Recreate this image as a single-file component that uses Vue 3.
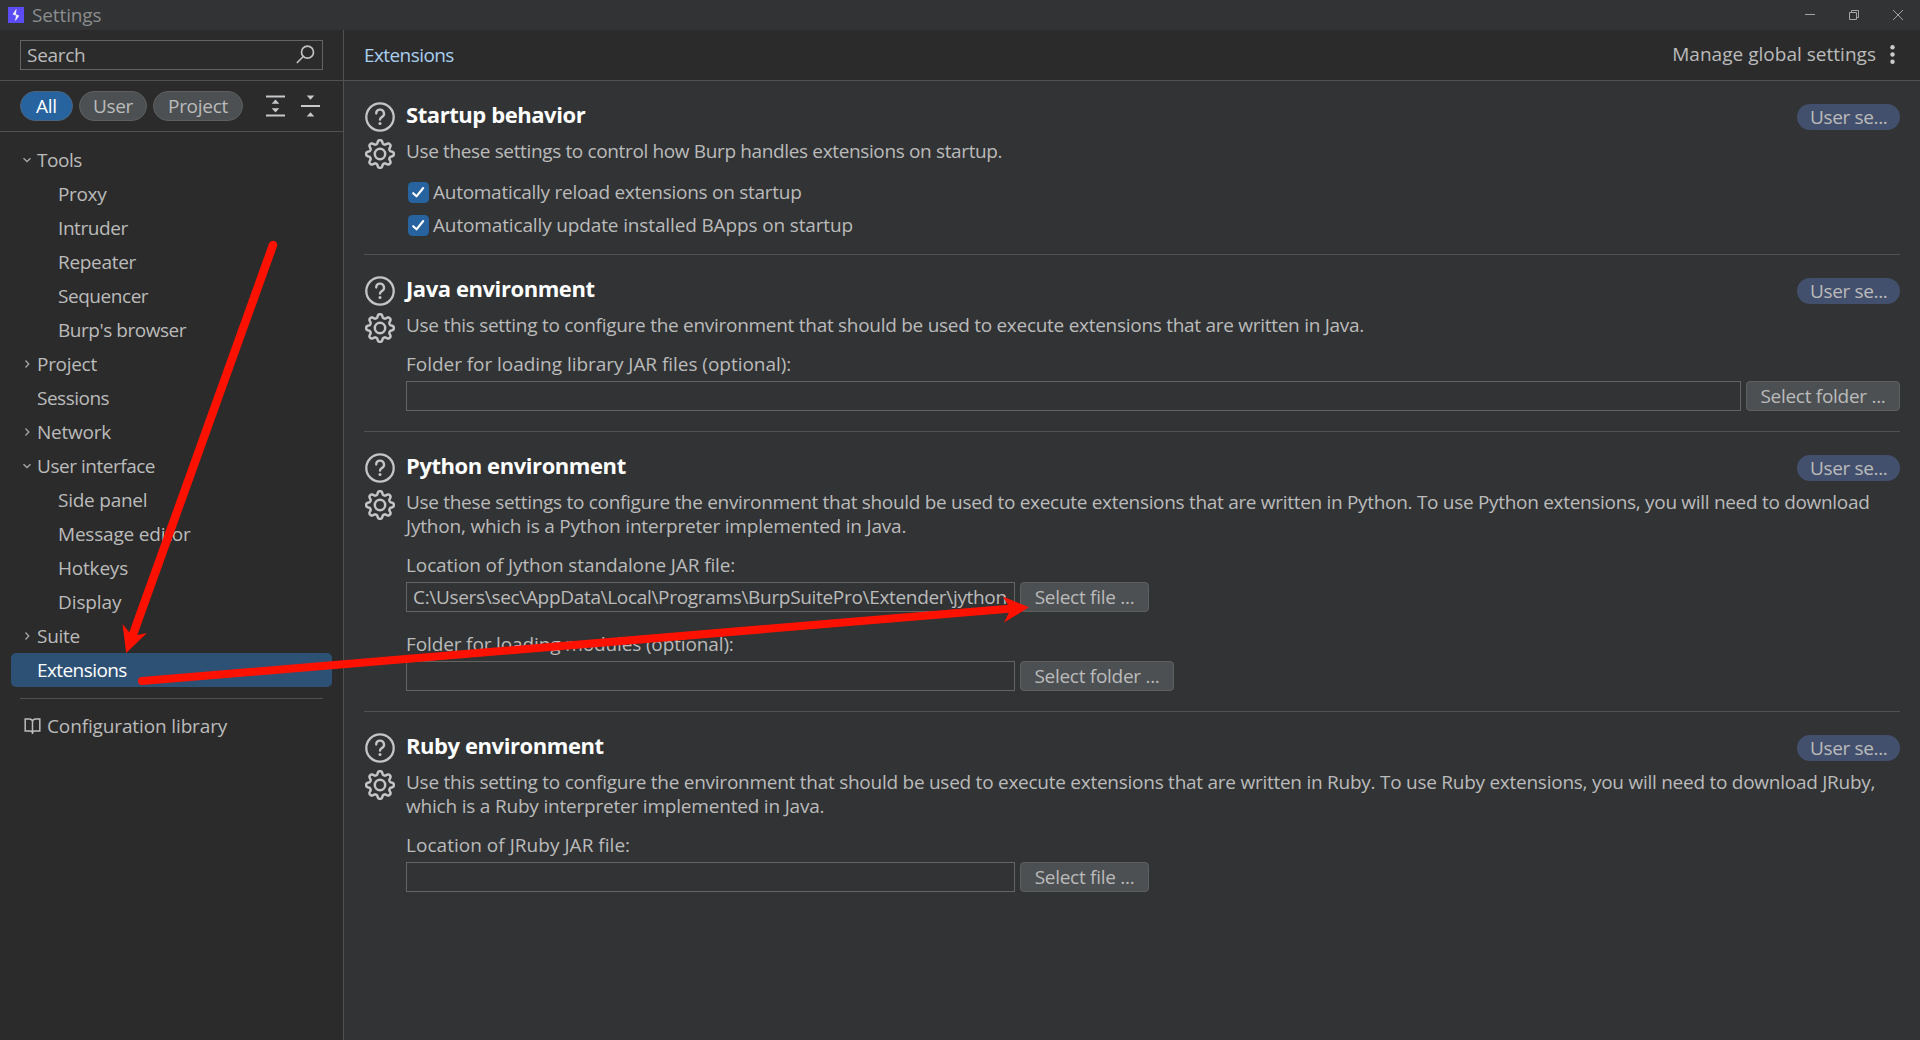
<script setup>
// `ls` is the letter spacing of a text, in pixels.
const tree = [
  { label: 'Tools', state: 'open', ls: -0.48 },
  { label: 'Proxy', child: true, ls: -0.35 },
  { label: 'Intruder', child: true, ls: -0.42 },
  { label: 'Repeater', child: true, ls: -0.3 },
  { label: 'Sequencer', child: true, ls: -0.45 },
  { label: "Burp's browser", child: true, ls: -0.46 },
  { label: 'Project', state: 'closed', ls: -0.3 },
  { label: 'Sessions', ls: -0.5 },
  { label: 'Network', state: 'closed', ls: -0.25 },
  { label: 'User interface', state: 'open', ls: -0.47 },
  { label: 'Side panel', child: true, ls: -0.24 },
  { label: 'Message editor', child: true, ls: -0.2 },
  { label: 'Hotkeys', child: true, ls: -0.2 },
  { label: 'Display', child: true, ls: -0.1 },
  { label: 'Suite', state: 'closed', ls: -0.28 },
  { label: 'Extensions', selected: true, ls: -0.58 },
]

const sections = [
  {
    title: 'Startup behavior',
    lines: [{ text: 'Use these settings to control how Burp handles extensions on startup.', ls: -0.36 }],
    checks: [
      { text: 'Automatically reload extensions on startup', ls: -0.27 },
      { text: 'Automatically update installed BApps on startup', ls: -0.14 },
    ],
  },
  {
    title: 'Java environment',
    lines: [{ text: 'Use this setting to configure the environment that should be used to execute extensions that are written in Java.', ls: -0.28 }],
    fields: [{ label: 'Folder for loading library JAR files (optional):', ls: -0.04, value: '', button: 'Select folder ...', wide: true }],
  },
  {
    title: 'Python environment',
    lines: [
      { text: 'Use these settings to configure the environment that should be used to execute extensions that are written in Python. To use Python extensions, you will need to download', ls: -0.305 },
      { text: 'Jython, which is a Python interpreter implemented in Java.', ls: -0.2 },
    ],
    fields: [
      { label: 'Location of Jython standalone JAR file:', ls: -0.11, value: 'C:\\Users\\sec\\AppData\\Local\\Programs\\BurpSuitePro\\Extender\\jython', button: 'Select file ...' },
      { label: 'Folder for loading modules (optional):', ls: -0.13, value: '', button: 'Select folder ...' },
    ],
  },
  {
    title: 'Ruby environment',
    lines: [
      { text: 'Use this setting to configure the environment that should be used to execute extensions that are written in Ruby. To use Ruby extensions, you will need to download JRuby,', ls: -0.258 },
      { text: 'which is a Ruby interpreter implemented in Java.', ls: -0.2 },
    ],
    fields: [{ label: 'Location of JRuby JAR file:', ls: 0.03, value: '', button: 'Select file ...' }],
  },
]

const spacing = (ls) => ({ letterSpacing: ls + 'px' })

// Eight-toothed outline, drawn as a flattened wave around a circle.
const gear = (() => {
  const pts = []
  for (let i = 0; i < 144; i++) {
    const a = (i / 144) * Math.PI * 2
    const r = 12.1 + 1.7 * Math.tanh(1.7 * Math.cos(8 * a)) / Math.tanh(1.7)
    pts.push(`${(15 + r * Math.cos(a)).toFixed(2)} ${(15 + r * Math.sin(a)).toFixed(2)}`)
  }
  return 'M' + pts.join('L') + 'Z'
})()
</script>

<template>
  <div class="window">
    <header class="titlebar">
      <svg class="logo" width="16" height="16" viewBox="0 0 16 16">
        <rect width="16" height="16" fill="#5b4cf5" />
        <path d="M8.200 2.400 5 7.200 8.500 8.400 7.400 13.400 11 8.800 7.500 7.400Z" fill="#fff" stroke="#fff" stroke-width=".5" />
      </svg>
      <span class="window-title">Settings</span>
      <svg class="controls" width="102" height="12" viewBox="0 0 102 12" fill="none" stroke="#a2a3a4">
        <path d="M1 5.500h10" />
        <path d="M45.500 3.500h7v7h-7zM47.500 3.500v-2h7v7h-2" />
        <path d="m89 1 10 10M99 1 89 11" />
      </svg>
    </header>

    <div class="content">
      <aside class="sidebar">
        <div class="search-row">
          <div class="search">
            <span>Search</span>
            <svg width="20" height="20" viewBox="0 0 20 20" fill="none" stroke="#bfc1c3" stroke-width="1.700" stroke-linecap="round">
              <circle cx="11.500" cy="7.200" r="6" />
              <path d="M7.300 11.500 1.300 17.500" />
            </svg>
          </div>
        </div>
        <div class="filters">
          <span class="pill active all">All</span>
          <span class="pill user">User</span>
          <span class="pill project">Project</span>
          <svg class="expand" width="19" height="22" viewBox="0 0 19 22" fill="#c6c8ca">
            <path d="M0 .5h19v2H0zM0 19.500h19v2H0zM9.500 4.500l3.800 4.300H5.700zM9.500 17.500l3.800-4.300H5.700z" />
          </svg>
          <svg class="collapse" width="19" height="22" viewBox="0 0 19 22" fill="#c6c8ca">
            <path d="M0 10h19v2H0zM9.500 4.800l3.800-4.300H5.700zM9.500 17.200l3.800 4.300H5.700z" />
          </svg>
        </div>
        <nav class="tree">
          <div v-for="n in tree" :key="n.label" class="node" :class="{ child: n.child, selected: n.selected }">
            <svg v-if="!n.child" class="chevron" width="10" height="10" viewBox="0 0 10 10" fill="none" stroke="#a4a7a9" stroke-width="1.300">
              <path v-if="n.state === 'open'" d="M1.500 3.200 5 6.500 8.500 3.200" />
              <path v-if="n.state === 'closed'" d="M3.500 1.500 6.800 5 3.500 8.500" />
            </svg>
            <span :style="spacing(n.ls)">{{ n.label }}</span>
          </div>
        </nav>
        <div class="library">
          <svg width="18" height="18" viewBox="0 0 18 18" fill="none" stroke="#bbbdbf" stroke-width="1.500">
            <path d="M8.500 4.200C8 2.500 7 2 5.500 2H1.200v12H6c1.500 0 2.500.7 2.500 1.900M8.500 4.200C9 2.500 10 2 11.500 2h4.300v12H11c-1.500 0-2.500.7-2.500 1.900M8.500 4v13" />
          </svg>
          <span>Configuration library</span>
        </div>
      </aside>

      <main class="main">
        <div class="main-head">
          <span class="crumb">Extensions</span>
          <span class="manage">Manage global settings</span>
          <svg width="6" height="20" viewBox="0 0 6 20" fill="#c9cbcd">
            <circle cx="2.500" cy="2.200" r="2.200" />
            <circle cx="2.500" cy="9.500" r="2.200" />
            <circle cx="2.500" cy="16.800" r="2.200" />
          </svg>
        </div>

        <section v-for="s in sections" :key="s.title" class="section">
          <div class="icons">
            <svg width="32" height="32" viewBox="0 0 32 32" fill="none" stroke="#c3c5c7" stroke-width="2.300" stroke-linecap="round">
              <circle cx="16" cy="16" r="13.700" />
              <path d="M12.200 12.600a3.900 3.900 0 1 1 5.600 3.500c-1.200.6-1.800 1.300-1.800 2.600" />
              <circle cx="16" cy="22.500" r="1.500" fill="#c3c5c7" stroke="none" />
            </svg>
            <svg width="30" height="30" viewBox="0 0 30 30" fill="none" stroke="#c3c5c7" stroke-width="2.500" stroke-linejoin="round">
              <path :d="gear" />
              <circle cx="15" cy="15" r="5.200" />
            </svg>
          </div>
          <div class="body">
            <div class="head">
              <h2>{{ s.title }}</h2>
              <span class="badge">User se...</span>
            </div>
            <p class="desc"><span v-for="l in s.lines" :key="l.text" :style="spacing(l.ls)">{{ l.text }}</span></p>
            <div v-if="s.checks" class="checks">
              <div v-for="c in s.checks" :key="c.text" class="check">
                <svg width="21" height="21" viewBox="0 0 21 21">
                  <rect width="21" height="21" rx="4.500" fill="#27649f" />
                  <path d="M5.200 11.200 8.500 14.300 15.200 6" fill="none" stroke="#fff" stroke-width="2.100" stroke-linecap="round" stroke-linejoin="round" />
                </svg>
                <span :style="spacing(c.ls)">{{ c.text }}</span>
              </div>
            </div>
            <div v-for="f in s.fields" :key="f.label" class="field">
              <span class="label" :style="spacing(f.ls)">{{ f.label }}</span>
              <div class="control" :class="{ wide: f.wide }">
                <div class="input">{{ f.value }}</div>
                <button :class="f.button === 'Select file ...' ? 'file' : 'folder'">{{ f.button }}</button>
              </div>
            </div>
          </div>
        </section>
      </main>
    </div>

    <svg class="arrows" width="1920" height="1040" viewBox="0 0 1920 1040" fill="#ff1100" stroke="#ff1100">
      <path d="M273 245 133.500 633" fill="none" stroke-width="8.500" stroke-linecap="round" />
      <path d="M126.200 653 122.500 624 130 633 137.500 635 147 633Z" stroke="none" />
      <path d="M142 681 1009 608.700" fill="none" stroke-width="8" stroke-linecap="round" />
      <path d="M1029 607.200 1002.500 596.500 1009 606 1009.500 611.500 1004 622.500Z" stroke="none" />
    </svg>
  </div>
</template>

<style>
body { background: #313335; }
</style>

<style scoped>
.window {
  position: relative;
  display: flex;
  flex-direction: column;
  width: 1920px;
  height: 1040px;
  overflow: hidden;
  background: #313335;
  color: #bbbbbb;
  font-family: "Open Sans", "Noto Sans", sans-serif;
  font-size: 19px;
  line-height: 24px;
  letter-spacing: -0.28px;
  white-space: nowrap;
}
svg { display: block; flex: none; }
.titlebar { display: flex; align-items: center; height: 30px; padding: 0 14px 0 8px; flex: none; }
.window-title { margin-left: 8px; color: #8b8d8e; letter-spacing: -0.12px; }
.controls { margin-left: auto; }
.content { display: flex; flex: 1; }
.sidebar { box-sizing: border-box; width: 344px; flex: none; background: #2b2b2b; border-right: 1px solid #515151; }
.search-row { padding: 10px 20px; border-bottom: 1px solid #515151; }
.search {
  box-sizing: border-box; display: flex; align-items: center; justify-content: space-between;
  height: 30px; padding: 0 6px; border: 1px solid #646464;
}
.filters { display: flex; align-items: center; height: 50px; padding-left: 20px; border-bottom: 1px solid #515151; }
.pill {
  box-sizing: border-box; display: flex; align-items: center; justify-content: center;
  height: 30px; margin-right: 6px; border: 1px solid #5e6060; border-radius: 15px; background: #4c5052;
}
.pill.active { background: #27649f; border-color: #4c6379; color: #fff; }
.all { width: 53px; }
.user { width: 68px; }
.project { width: 90px; }
.expand { margin-left: 17px; }
.collapse { margin-left: 16px; }
.tree { padding: 11px 11px 0; }
.node { display: flex; align-items: center; height: 34px; padding-left: 11px; border-radius: 5px; }
.node.child { padding-left: 47px; }
.node.selected { background: #2d5175; color: #fff; }
.chevron { margin-right: 5px; }
.library { display: flex; align-items: center; margin: 11px 20px 0; padding: 15px 0 0 4px; border-top: 1px solid #515151; letter-spacing: -0.13px; }
.library svg { margin-right: 5px; }
.main { flex: 1; min-width: 0; }
.main-head { display: flex; align-items: center; height: 50px; padding: 0 24px 0 20px; background: #2b2b2b; border-bottom: 1px solid #515151; }
.crumb { color: #a9cff0; letter-spacing: -0.58px; }
.manage { margin: 0 14px 2px auto; letter-spacing: 0.02px; }
.section { display: flex; margin: 0 20px; border-bottom: 1px solid #515151; }
.section:last-of-type { border-bottom: 0; }
.icons { display: flex; flex-direction: column; align-items: center; gap: 6px; width: 32px; padding-top: 20px; margin-right: 10px; }
.body { flex: 1; min-width: 0; padding: 19px 0 20px; }
.head { display: flex; align-items: center; height: 30px; }
h2 { margin: 0 0 2px; color: #fff; font-size: 22px; font-weight: 700; line-height: 30px; letter-spacing: -0.43px; }
.badge {
  display: flex; align-items: center; box-sizing: border-box; width: 103px; height: 26px;
  margin: 4px 0 0 auto; padding-left: 13px; border-radius: 13px; background: #43506d; letter-spacing: -0.35px;
}
.desc { display: flex; flex-direction: column; align-items: flex-start; margin: 9px 0 0; }
.checks { display: flex; flex-direction: column; gap: 12px; margin: 19px 0 -2px 2px; }
.check { display: flex; align-items: center; gap: 4px; height: 21px; }
.check span { padding-bottom: 2px; }
.field { margin-top: 15px; }
.field + .field { margin-top: 20px; }
.label { display: block; }
.control { display: flex; gap: 5px; margin-top: 5px; }
.input { box-sizing: border-box; display: flex; align-items: center; width: 609px; height: 30px; padding: 0 6px; border: 1px solid #646464; overflow: hidden; letter-spacing: -0.32px; }
.wide .input { flex: 1; }
button {
  box-sizing: border-box; width: 129px; height: 30px; padding: 0; border: 1px solid #5e6060; border-radius: 4px;
  background: #4c5052; color: inherit; font: inherit; letter-spacing: inherit;
}
button.folder { width: 154px; }
.arrows { position: absolute; inset: 0; pointer-events: none; }
</style>
